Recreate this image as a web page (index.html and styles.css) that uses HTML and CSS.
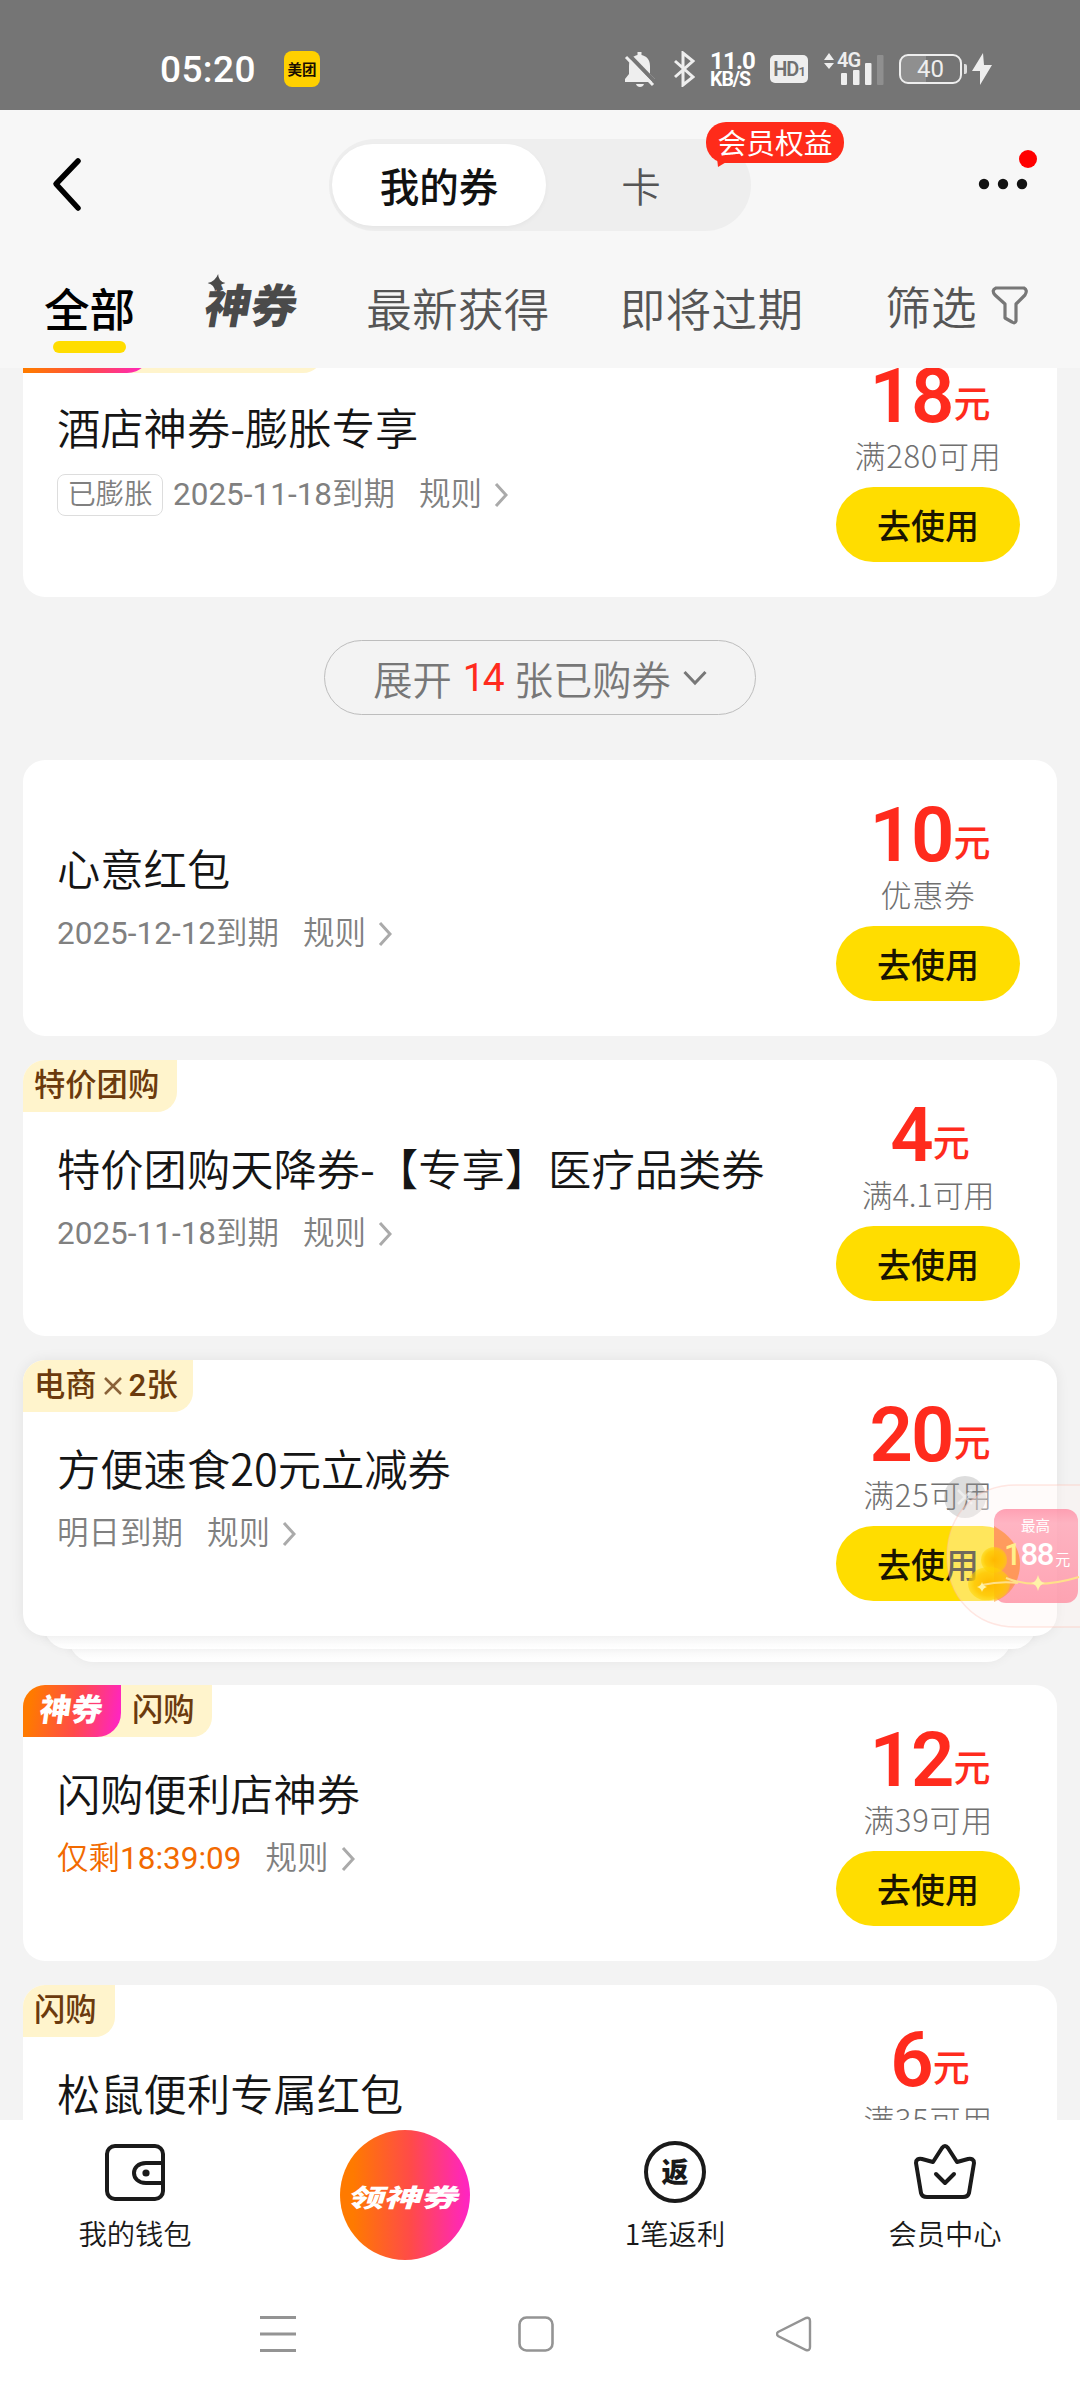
FILE: index.html
```html
<!DOCTYPE html>
<html lang="zh-CN">
<head>
<meta charset="utf-8">
<title>我的券</title>
<link rel="stylesheet" href="styles.css">
</head>
<body>
<div class="screen">
  <div class="status">
    <span class="clock">05:20</span>
    <span class="app-badge">美团</span>
    <div class="status-right">
      <svg class="i-bell" width="32" height="36" viewBox="0 0 32 36"><path d="M1 31v-3l4-5V15C5 8 9 5 13.500 4V1h4v3C22 5 26 8 26 15v8l5 5v3z" fill="#eee"/><path d="M12 33h8c-1 4-7 4-8 0z" fill="#eee"/><path d="M4 3l28 29" stroke="#757575" stroke-width="4"/><path d="M2 6l27 28" stroke="#eee" stroke-width="3"/></svg>
      <svg class="i-bt" width="22" height="36" viewBox="0 0 22 36"><path d="M2 10l18 16-10 8V2l10 8L2 26" fill="none" stroke="#eee" stroke-width="3"/></svg>
      <div class="speed"><b>11.0</b><i>KB/S</i></div>
      <div class="hd">HD<small>1</small></div>
      <div class="signal">
        <svg width="62" height="36" viewBox="0 0 62 36"><path d="M1 9l5-7 5 7zM1 12l5 6 5-6z" fill="#eee"/><rect x="18" y="22" width="6" height="12" rx="1" fill="#eee"/><rect x="30" y="19" width="6.500" height="15" rx="1" fill="#eee"/><rect x="42" y="12" width="6.500" height="22" rx="1" fill="#eee"/><rect x="54" y="4" width="6.500" height="30" rx="1" fill="#8f8f8f"/></svg>
        <span>4G</span>
      </div>
      <div class="battery">40</div>
      <svg class="i-bolt" width="20" height="32" viewBox="0 0 20 32"><path d="M11 0L0 18h8L8 32 20 12h-8z" fill="#eee"/></svg>
    </div>
  </div>

  <header class="header">
    <div class="topbar">
      <svg class="back" width="34" height="58" viewBox="0 0 34 58"><path d="M28 5L6 28l22 24" fill="none" stroke="#000" stroke-width="5.500" stroke-linecap="round" stroke-linejoin="round"/></svg>
      <div class="segment">
        <span class="seg on">我的券</span><span class="seg">卡</span>
        <div class="bubble">会员权益<svg width="12" height="10" viewBox="0 0 12 10"><path d="M0 0l1 9 10-6V0z" fill="#ff2b1a"/></svg></div>
      </div>
      <svg class="more" width="60" height="46" viewBox="0 0 60 46"><g fill="#111"><circle cx="6" cy="34" r="5.200"/><circle cx="25" cy="34" r="5.200"/><circle cx="44" cy="34" r="5.200"/></g><circle cx="50" cy="9" r="9" fill="red"/></svg>
    </div>
    <nav class="tabs">
      <span class="tab active">全部</span>
      <span class="tab brand">神券<svg width="18" height="18" viewBox="0 0 18 18"><path d="M9 0q1.500 7.500 9 9-7.500 1.500-9 9-1.500-7.500-9-9 7.500-1.500 9-9z" fill="#4a4a4a"/></svg></span>
      <span class="tab t3">最新获得</span>
      <span class="tab t4">即将过期</span>
      <span class="tab t5">筛选</span>
      <svg class="funnel" width="38" height="42" viewBox="0 0 38 42"><path d="M5 3h28q4 2 1 7L25 19v17q-1 3-4 1l-7-4V19L4 10Q0 5 5 3z" fill="none" stroke="#777" stroke-width="3.200" stroke-linejoin="round"/></svg>
    </nav>
  </header>

  <main class="list">
    <article class="card first">
      <div class="tags"><span class="tag hot"><em>神券</em></span><span class="tag wide">酒店</span></div>
      <div class="info">
        <h3>酒店神券-膨胀专享</h3>
        <p><span class="chip">已膨胀</span><span>2025-11-18到期</span><span class="rule">规则</span><svg class="arr" width="14" height="26" viewBox="0 0 14 26"><path d="M2 2l10 11L2 24"/></svg></p>
      </div>
      <div class="side"><div class="amt"><b>18</b><i>元</i></div><div class="cond">满280可用</div><button>去使用</button></div>
    </article>

    <div class="expand"><span>展开</span><span class="n">14</span><span>张已购券</span><svg width="24" height="16" viewBox="0 0 24 16"><path d="M1.500 2L12 13 22.500 2" fill="none" stroke="#777" stroke-width="3"/></svg></div>

    <article class="card">
      <div class="info">
        <h3>心意红包</h3>
        <p><span>2025-12-12到期</span><span class="rule">规则</span><svg class="arr" width="14" height="26" viewBox="0 0 14 26"><path d="M2 2l10 11L2 24"/></svg></p>
      </div>
      <div class="side"><div class="amt"><b>10</b><i>元</i></div><div class="cond">优惠券</div><button>去使用</button></div>
    </article>

    <article class="card">
      <div class="tags"><span class="tag">特价团购</span></div>
      <div class="info">
        <h3>特价团购天降券-【专享】医疗品类券</h3>
        <p><span>2025-11-18到期</span><span class="rule">规则</span><svg class="arr" width="14" height="26" viewBox="0 0 14 26"><path d="M2 2l10 11L2 24"/></svg></p>
      </div>
      <div class="side"><div class="amt"><b>4</b><i>元</i></div><div class="cond tight">满4.1可用</div><button>去使用</button></div>
    </article>

    <div class="stack">
      <article class="card">
        <div class="tags"><span class="tag multi">电商<svg width="18" height="18" viewBox="0 0 18 18"><path d="M1 1l16 16M17 1L1 17" stroke="#8a6238" stroke-width="2.500"/></svg>2张</span></div>
        <div class="info">
          <h3>方便速食20元立减券</h3>
          <p><span>明日到期</span><span class="rule">规则</span><svg class="arr" width="14" height="26" viewBox="0 0 14 26"><path d="M2 2l10 11L2 24"/></svg></p>
        </div>
        <div class="side"><div class="amt"><b>20</b><i>元</i></div><div class="cond">满25可用</div><button>去使用</button></div>
      </article>
      <div class="layer l1"></div>
      <div class="layer l2"></div>
    </div>

    <article class="card">
      <div class="tags"><span class="tag hot"><em>神券</em></span><span class="tag after">闪购</span></div>
      <div class="info">
        <h3>闪购便利店神券</h3>
        <p><span class="left">仅剩18:39:09</span><span class="rule">规则</span><svg class="arr" width="14" height="26" viewBox="0 0 14 26"><path d="M2 2l10 11L2 24"/></svg></p>
      </div>
      <div class="side"><div class="amt"><b>12</b><i>元</i></div><div class="cond">满39可用</div><button>去使用</button></div>
    </article>

    <article class="card">
      <div class="tags"><span class="tag">闪购</span></div>
      <div class="info">
        <h3>松鼠便利专属红包</h3>
      </div>
      <div class="side"><div class="amt"><b>6</b><i>元</i></div><div class="cond">满35可用</div></div>
    </article>
  </main>

  <aside class="floater">
    <svg width="136" height="160" viewBox="0 0 136 160">
      <defs>
        <linearGradient id="pk" x1="0" y1="0" x2="0" y2="1"><stop offset="0" stop-color="#ff8aa2"/><stop offset=".15" stop-color="#ffa3b5"/><stop offset="1" stop-color="#ff8fa2"/></linearGradient>
        <radialGradient id="gd"><stop offset="0" stop-color="#ffb800"/><stop offset=".7" stop-color="#ffc800" stop-opacity=".85"/><stop offset="1" stop-color="#ffd400" stop-opacity=".5"/></radialGradient>
      </defs>
      <circle cx="21" cy="21" r="21" fill="#999" fill-opacity=".33"/>
      <path d="M14 14l14 14M28 14L14 28" stroke="#fff" stroke-opacity=".5" stroke-width="2.500"/>
      <path d="M137 9H72C30 9 3 40 3 80s27 71 69 71h65z" fill="#fff4f2" fill-opacity=".38" stroke="#ffb9ae" stroke-opacity=".35" stroke-width="1.500"/>
      <rect x="50" y="33" width="84" height="94" rx="12" fill="url(#pk)" fill-opacity=".8"/>
      <path d="M50 50C64 58 76 70 76 88s-10 32-26 38z" fill="#ff8a1c" fill-opacity=".5"/>
      <circle cx="50" cy="84" r="13" fill="url(#gd)"/>
      <ellipse cx="45" cy="108" rx="21" ry="17" fill="url(#gd)"/>
      <path d="M38 109q18-4 36-2M62 102q30 12 73-1" stroke="#ffe08a" stroke-width="2" fill="none"/>
      <path d="M94 99q1.500 7 7 8-5.500 1-7 8-1.500-7-7-8 5.500-1 7-8z" fill="#fff3a8"/>
      <path d="M38 106q1 4 5 5-4 1-5 5-1-4-5-5 4-1 5-5z" fill="#fff3a8"/>
    </svg>
    <span class="f-top">最高</span>
    <span class="f-num"><i>1</i>88<small>元</small></span>
  </aside>

  <footer class="bottom">
    <div class="item">
      <svg width="62" height="62" viewBox="0 0 62 62"><g fill="none" stroke="#1a1a1a" stroke-width="4"><rect x="3" y="5" width="56" height="53" rx="8"/><path d="M58 22H42c-16 0-16 20 0 20h16"/></g><circle cx="42" cy="32" r="3.600" fill="#1a1a1a"/></svg>
      <span>我的钱包</span>
    </div>
    <div class="item"><div class="get"><em>领神券</em></div></div>
    <div class="item"><div class="ring">返</div><span>1笔返利</span></div>
    <div class="item">
      <svg width="64" height="62" viewBox="0 0 64 62"><g fill="none" stroke="#1a1a1a" stroke-width="4" stroke-linejoin="round" stroke-linecap="round"><path d="M8 52L3 22q0-5 6-4l11 3 9-14q3-4 6 0l9 14 11-3q6-1 6 4l-5 30q-1 4-6 4H14q-5 0-6-4z"/><path d="M23 33l9 9 9-9"/></g></svg>
      <span>会员中心</span>
    </div>
  </footer>
  <div class="sysnav">
    <svg width="36" height="36" viewBox="0 0 36 36"><path d="M0 1.500h36M0 18h36M0 34.500h36" stroke="#949494" stroke-width="3"/></svg>
    <svg width="36" height="36" viewBox="0 0 36 36"><rect x="1.500" y="1.500" width="33" height="33" rx="7" fill="none" stroke="#949494" stroke-width="2.600"/></svg>
    <svg width="36" height="36" viewBox="0 0 36 36"><path d="M2 16L30 2q4-1 4 3v26q0 4-4 3L2 20q-2-2 0-4z" fill="none" stroke="#949494" stroke-width="2.400"/></svg>
  </div>
</div>
</body>
</html>
```
FILE: styles.css
```css
* { box-sizing: border-box; }
body { margin: 0; font-family: Roboto, "Noto Sans CJK SC", sans-serif; background: #f3f3f3; }
svg { display: block; flex: none; }
h3, p { margin: 0; font-weight: 400; }
i, em { font-style: normal; }
.screen { position: relative; width: 1080px; height: 2400px; overflow: hidden; display: flex; flex-direction: column; white-space: nowrap; }

.status { height: 110px; flex: none; background: #757575; color: #fff; display: flex; align-items: center; padding: 28px 88px 0 160px; }
.clock { font-size: 37px; font-weight: 500; width: 124px; letter-spacing: .4px; }
.app-badge { width: 36px; height: 36px; border-radius: 8px; background: #ffd000; color: #1a0d00; font: 700 14.500px/36px "Noto Sans CJK SC", sans-serif; text-align: center; }
.status-right { margin-left: auto; display: flex; align-items: center; }
.i-bell { margin-right: 17px; }
.speed { margin-left: 15px; width: 44px; display: flex; flex-direction: column; padding-top: 3px; }
.speed b { font-size: 24px; line-height: 18px; font-weight: 700; letter-spacing: -.8px; }
.speed i { font-size: 19.500px; line-height: 20px; font-weight: 700; letter-spacing: -1px; }
.hd { margin-left: 16px; width: 38px; height: 28px; border-radius: 5px; background: #eee; color: #707070; font-size: 20px; line-height: 29px; font-weight: 600; text-align: center; letter-spacing: -1px; }
.hd small { font-size: 13px; }
.signal { position: relative; margin-left: 15px; }
.signal span { position: absolute; left: 14px; top: 0; font-size: 20px; line-height: 18px; font-weight: 600; letter-spacing: -1px; color: #eee; }
.battery { position: relative; margin-left: 14px; width: 63px; height: 30px; border: 2.500px solid #eee; border-radius: 9px; font-size: 24px; line-height: 26px; text-align: center; color: #eee; background: linear-gradient(90deg, #8f8f8f 42%, transparent 42%); }
.battery::after { content: ""; position: absolute; right: -7px; top: 8px; width: 3px; height: 10px; background: #ddd; border-radius: 0 2px 2px 0; }
.i-bolt { margin-left: 10px; }

.header { height: 258px; flex: none; background: #f7f7f7; }
.topbar { height: 150px; display: flex; align-items: flex-start; padding-top: 29px; }
.back { margin: 17px 0 0 50px; }
.segment { position: relative; margin-left: 245px; width: 422px; height: 92px; border-radius: 46px; background: #eee; display: flex; padding: 5px 3px; }
.seg { width: 190px; height: 82px; border-radius: 41px; text-align: center; font: 350 39.500px/82px "Noto Sans CJK SC", sans-serif; color: #555; }
.seg.on { width: 214px; background: #fff; color: #111; font-weight: 500; box-shadow: 0 2px 5px rgba(0,0,0,.04); }
.bubble { position: absolute; left: 377px; top: -17px; width: 138px; height: 41px; border-radius: 20px; background: #ff2b1a; color: #fff; font: 400 28.800px/39px "Noto Sans CJK SC", sans-serif; text-align: center; }
.bubble svg { position: absolute; left: 11px; top: 36px; }
.more { margin: 11px 0 0 227px; }
.tabs { height: 108px; display: flex; align-items: flex-start; padding: 19px 0 0 44px; font: 350 45.600px/56px "Noto Sans CJK SC", sans-serif; color: #555; }
.tab { position: relative; }
.active { color: #000; font-weight: 500; }
.active::after { content: ""; position: absolute; left: 9px; top: 62px; width: 73px; height: 12px; border-radius: 6px; background: #ffdd00; }
.brand { margin: -4px 0 0 71px; width: 92px; font-size: 46px; font-weight: 900; color: #4a4a4a; transform: skewX(-10deg); }
.brand svg { position: absolute; left: -2px; top: -1px; }
.t3 { margin-left: 68px; letter-spacing: .3px; }
.t4 { margin-left: 70px; letter-spacing: .3px; }
.t5 { margin-left: 82px; margin-top: -2px; }
.funnel { margin: 6px 0 0 14px; }

.list { height: 1752px; flex: none; overflow: hidden; background: #f3f3f3; padding: 0 23px; display: flex; flex-direction: column; gap: 24px; }
.card { position: relative; flex: none; width: 1034px; height: 276px; border-radius: 22px; background: #fff; overflow: hidden; display: flex; justify-content: space-between; padding: 0 37px 0 34px; }
.card.first { margin-top: -47px; }
.tags { position: absolute; left: 0; top: 0; display: flex; height: 52px; background: #fff4cc; border-radius: 0 0 20px 0; }
.tag { display: flex; align-items: center; gap: 8px; padding: 0 18px 1px 11px; font: 500 31.300px/50px Roboto, "Noto Sans CJK SC", sans-serif; color: #6b3a0d; }
.tag.multi { gap: 7px; padding-right: 15px; }
.tag.wide { width: 172px; padding-left: 12px; }
.tag.after { padding-left: 11px; padding-right: 17px; }
.tag.hot { width: 98px; border-radius: 0 0 24px 0; background: linear-gradient(100deg, #ff7a00 10%, #ff4a4a 55%, #ff25c0 95%); color: #fff; padding: 0 0 0 17px; }
.first .tag.hot { width: 128px; }
.tag.hot em { font-weight: 900; transform: skewX(-8deg); }
.info { padding-top: 77px; }
h3 { font: 350 43.300px/60px "Noto Sans CJK SC", sans-serif; color: #151515; }
.info p { display: flex; align-items: center; height: 44px; margin-top: 15px; font: 400 31.500px/44px Roboto, "Noto Sans CJK SC DemiLight", "Noto Sans CJK SC", sans-serif; color: #808080; }
.first .info { padding-top: 75px; }
.first .info p { margin-top: 17px; }
.chip { width: 106px; height: 42px; border: 1.500px solid #ddd; border-radius: 8px; font-size: 28.300px; line-height: 40px; text-align: center; margin-right: 10px; }
.rule { margin-left: 24px; }
.left { color: #f26a00; }
.arr { margin-left: 12px; fill: none; stroke: #aaa; stroke-width: 3; }
.side { width: 184px; padding-top: 34px; display: flex; flex-direction: column; align-items: center; }
.amt { display: flex; align-items: baseline; height: 78px; font: 500 37px/78px "Noto Sans CJK SC", sans-serif; color: #ff2b1d; padding-left: 4px; }
.amt b { font: 600 76px/78px Roboto, sans-serif; letter-spacing: -2px; margin-top: 2px; }
.amt i { transform: translateY(-4px); margin-left: 1px; }
.cond { font: 300 31px/44px "Noto Sans CJK SC", sans-serif; color: #707070; letter-spacing: .7px; }
.cond.tight { letter-spacing: -.2px; }
button { margin-top: 10px; width: 184px; height: 75px; flex: none; border: 0; padding: 0; border-radius: 38px; background: #ffdd00; color: #1a1400; font: 500 34px/75px "Noto Sans CJK SC", sans-serif; }
.expand { align-self: center; flex: none; width: 432px; height: 75px; margin: 19px 0 21px; border: 1.500px solid #bdbdbd; border-radius: 38px; display: flex; align-items: center; justify-content: center; font: 350 39.300px/70px "Noto Sans CJK SC", sans-serif; color: #777; }
.expand .n { color: #ff2b1d; margin: 0 11px; font: 400 39px/74px Roboto, sans-serif; letter-spacing: -2px; }
.expand svg { margin-left: 12px; }
.stack { display: flex; flex-direction: column; align-items: center; flex: none; margin-bottom: -1px; }
.stack .card { z-index: 3; box-shadow: 0 0 14px rgba(0,0,0,.07); }
.layer { position: relative; flex: none; height: 40px; margin-top: -27px; border-radius: 0 0 24px 24px; background: linear-gradient(#fafafa 66%, #fff); box-shadow: 0 0 12px rgba(0,0,0,.05); }
.l1 { width: 992px; z-index: 2; }
.l2 { width: 942px; z-index: 1; }

.floater { position: absolute; z-index: 10; left: 944px; top: 1476px; width: 136px; height: 160px; color: #fff; }
.f-top { position: absolute; left: 77px; top: 39px; font: 400 14.500px/20px "Noto Sans CJK SC", sans-serif; }
.f-num { position: absolute; left: 60px; top: 59px; font: 500 31px/40px Roboto, sans-serif; letter-spacing: -1.200px; }
.f-num i { color: #fff08a; }
.f-num small { font: 400 15px "Noto Sans CJK SC", sans-serif; margin-left: 2px; }

.bottom { height: 154px; flex: none; background: #fff; display: grid; grid-template-columns: repeat(4, 270px); }
.item { display: flex; flex-direction: column; align-items: center; padding-top: 21px; font: 350 28.300px/40px "Noto Sans CJK SC", sans-serif; color: #1a1a1a; }
.item > span { margin-top: 10px; }
.item:nth-child(2) { padding-top: 10px; }
.get { width: 130px; height: 130px; border-radius: 50%; background: linear-gradient(90deg, #ff7a00 10%, #ff4a4a 55%, #ff25c0 98%); color: #fff; display: grid; place-items: center; }
.get em { font-weight: 900; font-size: 37px; transform: scaleY(.68) skewX(-12deg); margin-top: 2px; }
.ring { width: 62px; height: 62px; border: 4px solid #1a1a1a; border-radius: 50%; font-size: 27px; font-weight: 900; line-height: 52px; text-align: center; }
.sysnav { height: 126px; flex: none; background: #fff; display: flex; justify-content: center; gap: 222px; padding: 42px 8px 0 0; }
```
